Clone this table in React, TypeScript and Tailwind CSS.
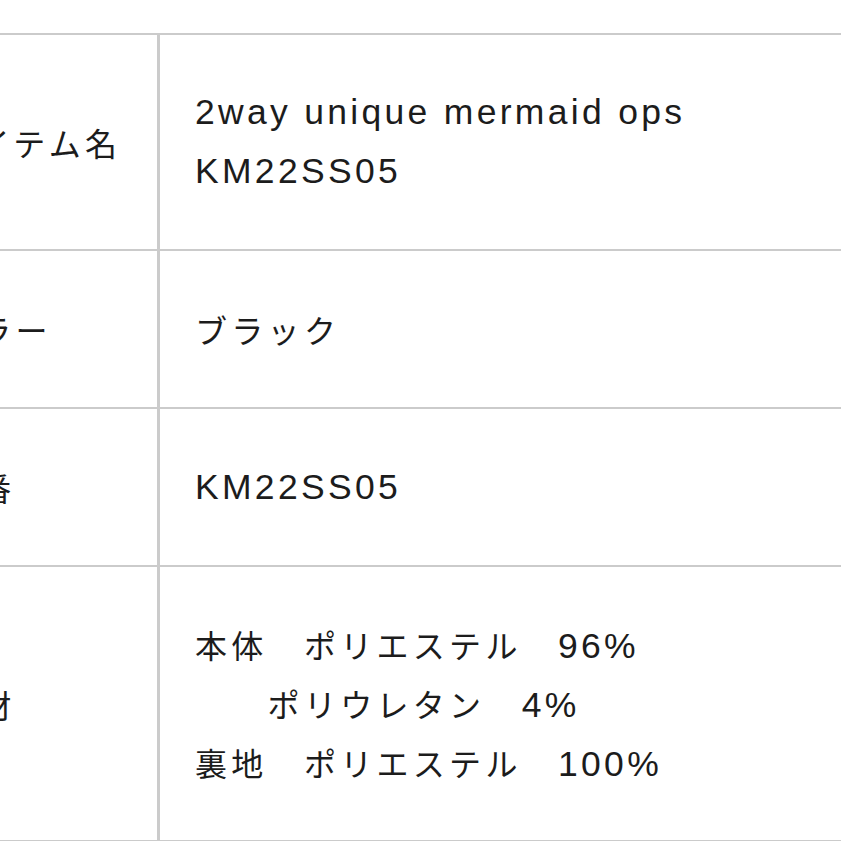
import React from "react";

const latin =
  "text-[35.5px] tracking-[3.3px] [font-family:'Liberation_Sans',Arial,sans-serif]";

function L({ children }: { children: React.ReactNode }) {
  return <span className={latin + " leading-[0px]"}>{children}</span>;
}

function Row({
  label,
  children,
  className,
}: {
  label: string;
  children: React.ReactNode;
  className: string;
}) {
  return (
    <div className="flex border-b-2 border-[#cbcbcb]">
      <div className="w-[252px] shrink-0 pl-[35px] flex items-center border-r-[3px] border-[#cbcbcb] whitespace-nowrap">
        {label}
      </div>
      <div className={"pl-[35px] whitespace-pre " + className}>{children}</div>
    </div>
  );
}

export default function App() {
  return (
    <div className="w-[841px] h-[841px] overflow-hidden bg-white pt-[33px] text-[32px] tracking-[4.3px] text-[#1c1c1c] [font-family:'Noto_Sans_CJK_JP',sans-serif]">
      <div className="-ml-[92px] w-[1100px] border-t-2 border-[#cbcbcb]">
        <Row label="アイテム名" className="py-[48px] leading-[59px]">
          <div className={latin}>2way unique mermaid ops</div>
          <div className={latin}>KM22SS05</div>
        </Row>
        <Row label="カラー" className="py-[48px] leading-[60px]">
          <div>ブラック</div>
        </Row>
        <Row label="品番" className="py-[48px] leading-[60px]">
          <div className={latin}>KM22SS05</div>
        </Row>
        <Row label="素材" className="py-[48px] leading-[59px]">
          <div>
            {"本体　ポリエステル　"}
            <L>96%</L>
          </div>
          <div>
            {"　　ポリウレタン　"}
            <L>4%</L>
          </div>
          <div>
            {"裏地　ポリエステル　"}
            <L>100%</L>
          </div>
        </Row>
      </div>
    </div>
  );
}
